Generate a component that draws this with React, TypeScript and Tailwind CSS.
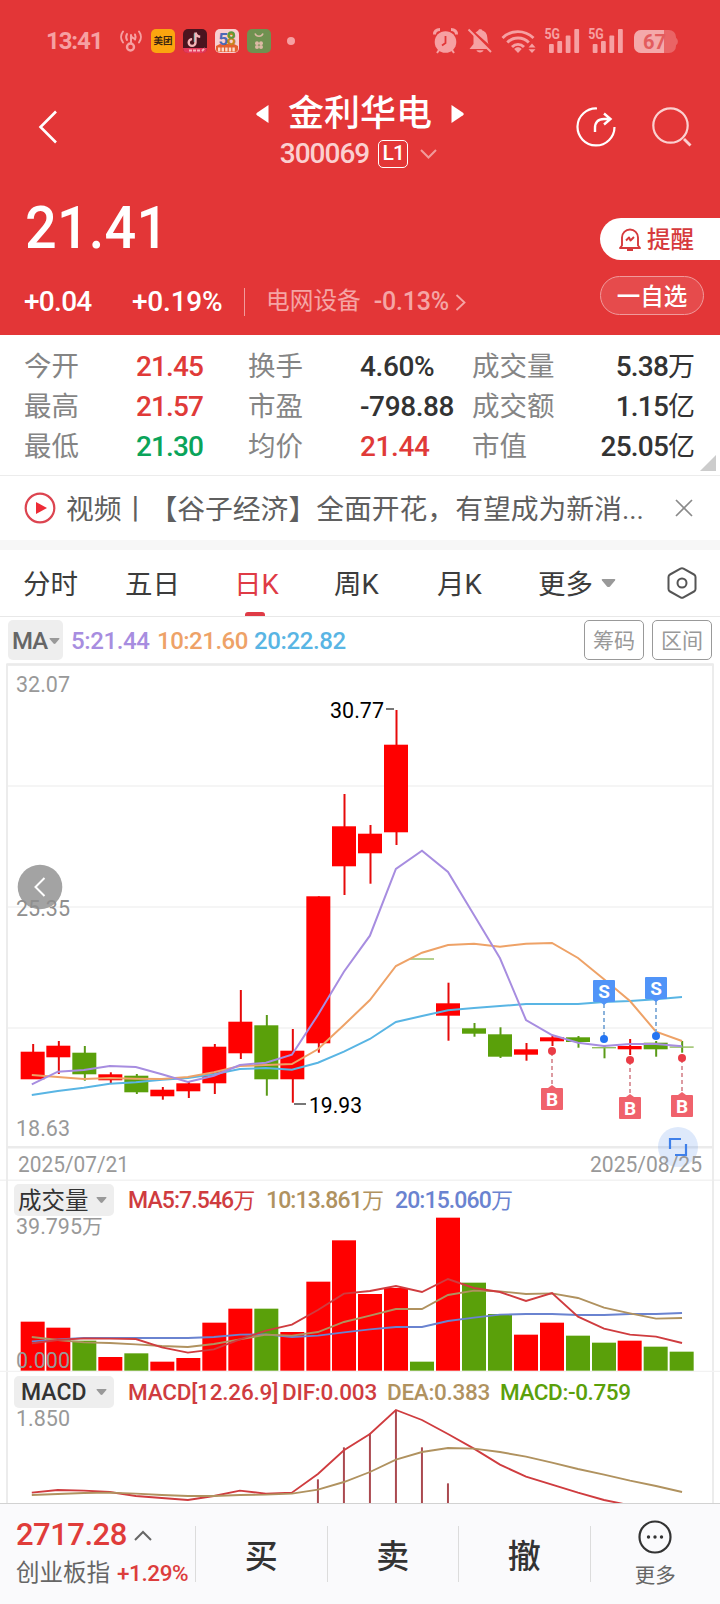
import type { ReactNode } from "react";

type Candle = {
  up: boolean;
  top: number;
  bottom: number;
  high: number;
  low: number;
};

const RED = "#ff0000";
const GREEN = "#5aa00a";

function candle(up: boolean, top: number, bottom: number, high: number, low: number): Candle {
  return { up, top, bottom, high, low };
}

const candles: Candle[] = [
  candle(true, 1051.7, 1079.3, 1044, 1079),
  candle(true, 1045.7, 1057.3, 1041, 1074),
  candle(false, 1052.7, 1074.3, 1046, 1080.7),
  candle(true, 1074.3, 1080.3, 1072.3, 1083.3),
  candle(false, 1075.7, 1092.3, 1074, 1094),
  candle(true, 1089.7, 1096.3, 1087, 1099.7),
  candle(true, 1083.3, 1091.3, 1081.3, 1098),
  candle(true, 1046.7, 1083.3, 1044, 1094),
  candle(true, 1021.7, 1053.3, 990, 1059),
  candle(false, 1025.3, 1079.3, 1015, 1095.7),
  candle(true, 1050.7, 1079.3, 1029, 1102.7),
  candle(true, 896.3, 1043.3, 896.3, 1052.7),
  candle(true, 826.3, 866.3, 794, 895),
  candle(true, 833.7, 853.3, 825, 883.7),
  candle(true, 744.7, 832.3, 710, 845),
  candle(false, 958.3, 959.7, 959, 959),
  candle(true, 1003.3, 1015.7, 982.7, 1040.7),
  candle(false, 1028.3, 1033.7, 1023, 1036.7),
  candle(false, 1034.3, 1056.7, 1027.3, 1058),
  candle(true, 1049.3, 1054.7, 1043, 1060.7),
  candle(true, 1037.3, 1041.3, 1035, 1046),
  candle(false, 1037.3, 1042, 1036, 1047.7),
  candle(false, 1047, 1048.4, 1046, 1058.3),
  candle(true, 1046, 1049.3, 1039, 1055),
  candle(false, 1042.7, 1049.3, 1041, 1056.7),
  candle(false, 1046.4, 1047.8, 1041, 1052.7),
];

const ma5 = [1084.3, 1071.7, 1070, 1066, 1067, 1074.3, 1082, 1075.7, 1065, 1062.7, 1054.7, 1015, 971.7, 935.7, 869, 850.7, 872, 915, 958.3, 1020, 1035, 1042.7, 1046, 1044, 1044, 1046.3];
const ma10 = [1075, 1077, 1079, 1078, 1078.7, 1079, 1077, 1072.3, 1066, 1065, 1064, 1049.3, 1025, 1000, 966, 952.7, 945, 943.7, 946.7, 943.7, 943, 958, 979.3, 1001, 1031.7, 1041];
const ma20 = [1095, 1091, 1087.7, 1083.7, 1082.3, 1079.7, 1078, 1074.3, 1069, 1068, 1069.7, 1062.7, 1051.7, 1039, 1022, 1016, 1010.3, 1008, 1006, 1004, 1004, 1004, 1002, 1001, 999.3, 997];

// the volume and MACD panes are drawn in a 2160 unit wide space
const volumes = [455, 473, 512, 561, 550, 575, 564, 458, 416, 416, 486, 335, 211, 372, 354, 575, 143, 338, 432, 494, 458, 497, 518, 512, 530, 545];
const vol5 = [520, 510, 505, 506, 507, 532, 548, 538, 508, 482, 464, 420, 371, 363, 348, 366, 327, 354, 366, 393, 369, 440, 476, 494, 500, 519];
const vol10 = [501, 510, 517, 519, 523, 528, 531, 522, 508, 494, 497, 486, 456, 437, 417, 417, 375, 362, 364, 372, 370, 384, 413, 430, 446, 444];
const vol20 = [514, 508, 504, 504, 504, 504, 504, 501, 494, 493, 501, 497, 487, 478, 471, 471, 453, 443, 434, 432, 432, 435, 435, 432, 432, 429];

const dif = [968, 960, 962, 966, 978, 984, 990, 978, 962, 971, 968, 912, 841, 792, 720, 750, 792, 836, 884, 920, 944, 968, 990, 1006];
const dea = [975, 972, 969, 968, 971, 975, 978, 978, 975, 974, 971, 959, 936, 906, 869, 846, 834, 836, 846, 860, 878, 897, 914, 932, 948, 966];
const macdBars = [
  { i: 11, y: 928 },
  { i: 12, y: 832 },
  { i: 13, y: 790 },
  { i: 14, y: 720 },
  { i: 15, y: 832 },
  { i: 16, y: 940 },
];

function linePoints(values: number[], scale = 1) {
  return values.map((y, i) => `${((31.8 + i * 26.01) * scale).toFixed(1)},${y}`).join(" ");
}

const barX = (i: number) => Math.round((20.5 + i * 25.97) * 3) / 3;

const trades = [
  { kind: "B", x: 552, dot: 1051, box: 1088 },
  { kind: "S", x: 604, dot: 1039, box: 980 },
  { kind: "B", x: 630, dot: 1060, box: 1097 },
  { kind: "S", x: 656, dot: 1036, box: 977 },
  { kind: "B", x: 682, dot: 1058, box: 1095 },
];

function ChartText(props: { x: number; y: number; w?: number; fill?: string; size?: number; children: ReactNode }) {
  return (
    <text
      x={props.x}
      y={props.y}
      fontSize={props.size ?? 22.5}
      fill={props.fill ?? "#999"}
      textLength={props.w}
      lengthAdjust="spacingAndGlyphs"
    >
      {props.children}
    </text>
  );
}

function StatusBar() {
  return (
    <div className="flex h-[82px] items-center justify-between pr-[44px] pl-[46px] text-[#f6a0a2]">
      <div className="flex items-center">
        <span className="w-[73px] text-[24px] font-bold tracking-[-1.1px]">13:41</span>
        <svg width="24" height="22" viewBox="0 0 24 22" fill="none" stroke="currentColor" strokeWidth="2" strokeLinecap="round">
          <path d="M4 1.500a9 9 0 0 0 0 11M8 4a6 6 0 0 0 0 6M20 1.500a9 9 0 0 1 0 11M16 4.500a6 6 0 0 1 0 5M12 5v8M12 5.500c.5 2 1.500 2.500 3 3" />
          <circle cx="11.5" cy="17" r="3.5" strokeWidth="2.4" />
        </svg>
        <span className="ml-2 flex size-6 items-center justify-center rounded-[5px] bg-[#fba50f] text-[9.5px] font-bold text-[#3a2410]">
          美团
        </span>
        <svg className="ml-2" width="24" height="24" viewBox="0 0 24 24" fill="none">
          <rect width="24" height="24" rx="5" fill="#4b141f" />
          <path d="M12.500 3.500v10a3.400 3.400 0 1 1-3.400-3.400M12.500 3.500c.5 2.700 2 4 4.700 4.200" stroke="#f6b6b9" strokeWidth="2.4" />
          <path d="M11.300 4.500v8.500" stroke="#86c9cb" strokeWidth="1" />
          <path d="M0 19h24q0 5-5 5H5q-5 0-5-5z" fill="#e5395b" />
          <path d="M6 21.500h11M19 22l3-3" stroke="#f9b3ba" strokeWidth="1.8" strokeDasharray="3 1" />
        </svg>
        <svg className="ml-2" width="24" height="24" viewBox="0 0 24 24">
          <rect width="24" height="24" rx="5" fill="#f7cfd0" />
          <path d="M1 17l4-2 14 0 4 2v3q0 3-3 3H4q-3 0-3-3z" fill="#e4602f" />
          <path d="M3 20.500h18" stroke="#fbd9c8" strokeWidth="4" strokeDasharray="2.4 1.2" />
          <text x="3.5" y="15.5" fontSize="17" fontWeight="700" fill="#4c69b5">5</text>
          <text x="11.5" y="15.5" fontSize="17" fontWeight="700" fill="#c8851f">8</text>
          <circle cx="16.3" cy="6" r="2.7" fill="none" stroke="#5c9a3c" strokeWidth="2" />
        </svg>
        <svg className="ml-2" width="24" height="24" viewBox="0 0 24 24">
          <rect width="24" height="24" rx="5" fill="#6f9150" />
          <path d="M8 4.500a4.300 4.300 0 0 0 8 0" stroke="#dcb9a4" strokeWidth="1.6" fill="none" />
          <g fill="#dcb9a4">
            <circle cx="10" cy="14.2" r="2" />
            <circle cx="14" cy="14.2" r="2" />
            <circle cx="10" cy="18" r="2" />
            <circle cx="14" cy="18" r="2" />
          </g>
        </svg>
        <span className="ml-4 size-2 rounded-full bg-current" />
      </div>
      <svg width="244" height="28" viewBox="432 27 244 28" fill="none" stroke="currentColor" className="overflow-visible">
        <circle cx="445.5" cy="42" r="10.8" fill="currentColor" stroke="none" />
        <path d="M434.5 34.500c0-3 2-5 5.500-5M456.500 34.500c0-3-2-5-5.500-5" strokeWidth="3" />
        <path d="M439 50l-2 3M452 50l2 3" strokeWidth="2" />
        <path d="M445.500 36v7l-3.500 2.500" stroke="#e23637" strokeWidth="1.8" />
        <path d="M473.500 35l14 14h-18l4-5zM475.500 32.500c1.500-1.500 3-1.500 3.500-3.300h2.500c.5 1.800 2.300 1 4.300 3.500 2 2.800 1.500 7 2.200 10.300l1 1.500z" fill="currentColor" stroke="none" />
        <path d="M476.500 50.300h7c-.5 2.800-6.500 2.800-7 0z" fill="currentColor" stroke="none" />
        <path d="M468.500 29.500l22.500 22.500" strokeWidth="2" />
        <path d="M502.500 38c8.500-8.500 22-8.500 31 0M507.300 42.500c6-6 15.500-6 21.500 0M512 47c3.500-3.500 8.500-3.500 12 0" strokeWidth="2.9" />
        <path d="M518 53l-3.800-4c2-2.200 5.500-2.200 7.500 0z" fill="currentColor" stroke="none" />
        <path d="M528.500 47.500l3.500-4 3.500 4zM528.500 49.300l3.500 3.700 3.500-3.700z" fill="currentColor" stroke="none" />
        {[0, 43.7].map((dx) => (
          <g key={dx} fill="currentColor" stroke="none">
            <rect x={549 + dx} y="44" width="4.8" height="9" rx="1" />
            <rect x={557.3 + dx} y="41" width="4.8" height="12" rx="1" />
            <rect x={565.7 + dx} y="35.5" width="4.8" height="17.5" rx="1" />
            <rect x={574.3 + dx} y="29" width="4.8" height="24" rx="1" />
            <text x={544.5 + dx} y="39" fontSize="14" fontWeight="700" textLength="15.5" lengthAdjust="spacingAndGlyphs">
              5G
            </text>
          </g>
        ))}
        <rect x="634" y="30" width="42" height="23" rx="7" fill="#ea6465" stroke="none" />
        <path d="M641 30h23v23h-23a7 7 0 0 1-7-7v-9a7 7 0 0 1 7-7z" fill="#f4a9aa" stroke="none" />
        <path d="M676 38c2.500 1 2.500 6 0 7z" fill="#ea6465" stroke="none" />
        <text x="643" y="49" fontSize="20" fontWeight="700" fill="#e35c5e" stroke="none">
          67
        </text>
      </svg>
    </div>
  );
}

function Header() {
  return (
    <header className="h-[335px] bg-[#e33637] text-white">
      <StatusBar />
      <div className="flex h-[106px] pr-[28px] pl-[38px]">
        <svg className="mt-[28px]" width="20" height="34" viewBox="0 0 20 34" fill="none" stroke="white" strokeWidth="2.6">
          <path d="M18 1.500L2.500 17 18 32.500" />
        </svg>
        <div className="ml-[198px] flex flex-col items-center">
          <div className="mt-[8px] flex h-[48px] items-center">
            <svg width="13" height="20" viewBox="0 0 13 20" fill="white">
              <path d="M12.500 1v18L1 11.300q-1.500-1.300 0-2.600z" />
            </svg>
            <span className="mx-[19px] text-[36px] leading-[46px] font-medium">金利华电</span>
            <svg width="13" height="20" viewBox="0 0 13 20" fill="white">
              <path d="M.5 1v18L12 11.300q1.500-1.300 0-2.600z" />
            </svg>
          </div>
          <div className="mr-[3px] flex h-[32px] items-center">
            <span className="text-[28px] font-medium tracking-[-1px] text-[#fbd0d0]">300069</span>
            <span className="ml-[9px] flex h-[28px] w-[30px] items-center justify-center rounded-[5px] border border-white text-[21px] font-medium tracking-[-1px]">
              L1
            </span>
            <svg className="ml-[12px]" width="17" height="10" viewBox="0 0 17 10" fill="none" stroke="#f19b9b" strokeWidth="2">
              <path d="M1 1l7.500 7.500L16 1" />
            </svg>
          </div>
        </div>
        <div className="mt-[25px] ml-auto flex h-[40px] gap-[36px]">
          <svg width="40" height="40" viewBox="0 0 40 40" fill="none" stroke="white" strokeWidth="2.2">
            <path d="M21 1.500A18.500 18.500 0 1 0 38.500 20" />
            <path d="M19 25v-4c0-6 3-9 9-9h6M28 6.500l6.500 5.500-6.500 5.500" strokeWidth="2.4" />
          </svg>
          <svg width="40" height="40" viewBox="0 0 40 40" fill="none" stroke="#fbd0d0" strokeWidth="2.2">
            <circle cx="18.5" cy="18.5" r="17.2" />
            <path d="M32 32l6.500 6.500" strokeWidth="2.8" />
          </svg>
        </div>
      </div>
      <div className="flex">
        <div className="flex grow flex-col">
          <span className="mt-[4px] ml-[25px] origin-left scale-x-[0.93] text-[60px] leading-[72px] font-medium tracking-[0.2px]">21.41</span>
          <div className="mt-[21px] flex h-[34px] items-center pl-[24px] text-[28px] font-medium">
            <span className="w-[108px] tracking-[-0.7px]">+0.04</span>
            <span className="w-[112px] tracking-[-0.2px]">+0.19%</span>
            <span className="h-[28px] w-px bg-[#f19b9b]" />
            <span className="ml-[21px] text-[23.7px] font-normal text-[#f5a5a5]">电网设备</span>
            <span className="ml-[13px] text-[25px] font-medium tracking-[-0.2px] text-[#f5a5a5]">-0.13%</span>
            <svg className="ml-[6px]" width="11" height="17" viewBox="0 0 11 17" fill="none" stroke="#f5a5a5" strokeWidth="1.8">
              <path d="M1.500 1l8 7.500-8 7.500" />
            </svg>
          </div>
        </div>
        <div className="mt-[30px] flex w-[120px] flex-col gap-[16px]">
          <button type="button" className="flex h-[42px] items-center rounded-l-full bg-white pl-[18px] text-[23.5px] font-medium text-[#d63a3c]">
            <svg className="mr-[5px]" width="24" height="24" viewBox="0 0 24 24" fill="none" stroke="currentColor" strokeWidth="1.9" strokeLinejoin="round">
              <path d="M4 18.500v-8a8 8 0 0 1 16 0v8l2 2.500H2z" />
              <path d="M9 23h6" strokeWidth="2.2" />
              <path d="M8 13.500l3-3 1.500 3 3.500-3.500" />
            </svg>
            <span className="pt-[3px]">提醒</span>
          </button>
          <button type="button" className="flex h-[39px] w-[104px] items-center justify-center rounded-full border border-[#f09a9b] bg-[#e64b4c] pt-[4px] text-[23.5px] font-medium">
            一自选
          </button>
        </div>
      </div>
    </header>
  );
}

const stats = [
  ["今开", "21.45", "text-[#e03a38]", "换手", "4.60%", "text-[#333]", "成交量", "5.38万"],
  ["最高", "21.57", "text-[#e03a38]", "市盈", "-798.88", "text-[#333]", "成交额", "1.15亿"],
  ["最低", "21.30", "text-[#0aa45a]", "均价", "21.44", "text-[#e03a38]", "市值", "25.05亿"],
];

function Stats() {
  return (
    <section className="relative h-[141px] border-b border-[#ececec] pt-[12px]">
      {stats.map((r) => (
        <div key={r[0]} className="flex h-[40px] items-center pr-[25px] pl-[24px] text-[27.5px] whitespace-nowrap text-[#858585]">
          <span className="w-[112px]">{r[0]}</span>
          <span className={`w-[112px] text-[28px] font-medium tracking-[-0.9px] ${r[2]}`}>{r[1]}</span>
          <span className="w-[112px]">{r[3]}</span>
          <span className={`w-[112px] text-[28px] font-medium tracking-[-0.4px] ${r[5]}`}>{r[4]}</span>
          <span>{r[6]}</span>
          <span className="ml-auto text-[28px] font-medium tracking-[-0.8px] text-[#333]">
            {r[7].slice(0, -1)}
            <span className="text-[27px] font-normal tracking-normal">{r[7].slice(-1)}</span>
          </span>
        </div>
      ))}
      <svg className="absolute right-[4px] bottom-[4px]" width="16" height="16" viewBox="0 0 16 16">
        <path d="M16 0v16H0z" fill="#ccc" />
      </svg>
    </section>
  );
}

function News() {
  return (
    <section className="flex h-[64px] items-center pl-[24px] text-[27.8px] whitespace-nowrap text-[#5f5f5f]">
      <svg width="32" height="32" viewBox="0 0 32 32" fill="none">
        <circle cx="16" cy="16" r="14.3" stroke="#dc4450" strokeWidth="2.2" />
        <path d="M12 10l11 6-11 6z" fill="#ee2b36" />
      </svg>
      <p className="ml-[10px] w-[609px] pt-[3px]">
        视频丨【谷子经济】全面开花，有望成为新消...
      </p>
      <svg width="18" height="18" viewBox="0 0 18 18" stroke="#8a8a8a" strokeWidth="1.7">
        <path d="M1 1l16 16M17 1L1 17" />
      </svg>
    </section>
  );
}

function Tabs() {
  return (
    <nav className="flex h-[67px] items-center border-b border-[#e8e8e8] pl-[23px] text-[27.5px] whitespace-nowrap text-[#3c3c3c]">
      <span className="w-[102px] pt-[3px]">分时</span>
      <span className="w-[109px] pt-[3px]">五日</span>
      <span className="relative flex h-full w-[100px] items-center pt-[3px] text-[#df3b46]">
        日K
        <span className="absolute bottom-0 left-[11px] h-[4px] w-[20px] rounded-t-[3px] bg-[#df3b46]" />
      </span>
      <span className="w-[103px] pt-[3px]">周K</span>
      <span className="w-[101px] pt-[3px]">月K</span>
      <span className="w-[54px] pt-[3px]">更多</span>
      <svg className="ml-[9px]" width="15" height="10" viewBox="0 0 15 10">
        <path d="M1.500 1h12q1.500 0 .5 1.500L9 8.500q-1.500 1-3 0L1 2.500Q0 1 1.500 1z" fill="#999" />
      </svg>
      <svg className="ml-[50px]" width="32" height="32" viewBox="0 0 32 32" fill="none" stroke="#555" strokeWidth="2">
        <path d="M14.500 1.700q1.500-.8 3 0L28 7.500q1.500.8 1.500 2.500v12q0 1.700-1.500 2.500l-10.500 5.800q-1.500.8-3 0L4 24.500q-1.500-.8-1.500-2.500v-12Q2.500 8.300 4 7.500z" />
        <circle cx="16" cy="16" r="4.5" />
      </svg>
    </nav>
  );
}

function Caret() {
  return (
    <svg width="11" height="8" viewBox="0 0 11 8" className="shrink-0">
      <path d="M1 1h9q.8.200.3 1L6.500 6.500q-1 .8-2 0L.7 2Q.2 1.200 1 1z" fill="#999" />
    </svg>
  );
}

function MaRow() {
  return (
    <div className="flex h-[46px] items-center pr-[8px] pl-[8px] text-[24px] font-medium">
      <span className="flex h-[40px] w-[55px] items-center rounded-[5px] bg-[#eeeeee] pt-px pl-[4px] tracking-[-1px] text-[#666]">
        <span className="mr-[2px]">MA</span>
        <Caret />
      </span>
      <span className="ml-[8px] w-[86px] pt-[2px] tracking-[-0.4px] text-[#a78de0]">5:21.44</span>
      <span className="w-[97px] pt-[2px] tracking-[-0.5px] text-[#eea267]">10:21.60</span>
      <span className="pt-[2px] tracking-[-0.4px] text-[#59b5e4]">20:22.82</span>
      <span className="ml-auto flex h-[40px] w-[60px] items-center justify-center rounded-[5px] border border-[#999] pt-[3px] text-[21px] font-normal text-[#999]">
        筹码
      </span>
      <span className="ml-[8px] flex h-[40px] w-[60px] items-center justify-center rounded-[5px] border border-[#999] pt-[3px] text-[21px] font-normal text-[#999]">
        区间
      </span>
    </div>
  );
}

function KChart() {
  return (
    <svg className="block" width="720" height="518" viewBox="0 663 720 518">
      <path d="M0 1180.3h720" stroke="#f2f2f2" strokeWidth="1.5" />
      <path d="M7 1181V664.500h706V1181" fill="none" stroke="#ececec" strokeWidth="2" />
      <path d="M7 664.500h706M7 1147.300h706" stroke="#ebebeb" strokeWidth="2.5" />
      <path d="M8 786h704M8 907h704M8 1028h704" stroke="#f2f2f2" strokeWidth="1.5" />
      <circle cx="40" cy="887" r="22.3" fill="#a3a3a3" />
      <path d="M44.500 878l-9 9 9 9" fill="none" stroke="white" strokeWidth="2" />
      {candles.map((c, i) => {
        const color = c.up ? RED : GREEN;
        const flat = c.bottom - c.top < 2;
        return (
          <g key={i}>
            <path d={`M${barX(i) + 12.5} ${c.high}V${c.low}`} stroke={c.up ? "#e60a0a" : "#5a9a18"} strokeWidth="2" />
            <rect x={barX(i)} y={c.top} width="24" height={c.bottom - c.top} fill={flat ? "#93bd5f" : color} />
          </g>
        );
      })}
      <g fill="none" strokeWidth="2">
        <polyline points={linePoints(ma20)} stroke="#59b5e4" />
        <polyline points={linePoints(ma10)} stroke="#eea267" />
        <polyline points={linePoints(ma5)} stroke="#a78de0" />
      </g>
      {trades.map((t) => {
        const sell = t.kind === "S";
        return (
          <g key={t.x}>
            <path
              d={sell ? `M${t.x} ${t.box + 24}V${t.dot}` : `M${t.x} ${t.box - 4}V${t.dot}`}
              stroke={sell ? "#7fabd8" : "#d99097"}
              strokeWidth="1.8"
              strokeDasharray="4 3"
            />
            <circle cx={t.x} cy={t.dot} r="4" fill={sell ? "#2475f2" : "#ea3c46"} />
            <rect x={t.x - 11} y={t.box} width="22" height="22" rx="1" fill={sell ? "#5094f8" : "#f0626c"} />
            <path
              d={sell ? `M${t.x - 4} ${t.box + 22}h8l-4 3z` : `M${t.x - 4} ${t.box}h8l-4-3z`}
              fill={sell ? "#5094f8" : "#f0626c"}
            />
            <text x={t.x} y={t.box + 18} fontSize="19" fontWeight="700" fill="white" textAnchor="middle">
              {t.kind}
            </text>
          </g>
        );
      })}
      <path d="M386 709h8M294 1104h12" stroke="#777" strokeWidth="1.8" />
      <ChartText x={16} y={692} w={54}>32.07</ChartText>
      <ChartText x={16} y={916} w={54} fill="#8f8f8f">25.35</ChartText>
      <ChartText x={16} y={1136} w={54}>18.63</ChartText>
      <ChartText x={330} y={718} w={54} fill="#000">30.77</ChartText>
      <ChartText x={309} y={1113} w={53} fill="#000">19.93</ChartText>
      <circle cx="678" cy="1147" r="20" fill="#4a87e8" fillOpacity="0.18" />
      <path d="M670 1149v-10h11M686 1144v11h-11" fill="none" stroke="#3f80ea" strokeWidth="2.2" />
      <ChartText x={18} y={1172} w={111}>2025/07/21</ChartText>
      <ChartText x={590} y={1172} w={112}>2025/08/25</ChartText>
    </svg>
  );
}

function VolumePane() {
  return (
    <section className="relative h-[191px]">
      <svg className="block" width="720" height="191" viewBox="0 33 2160 573">
        <path d="M21 33v573M2139 33v573" stroke="#ececec" strokeWidth="6" />
        <path d="M0 604.500h2160" stroke="#f2f2f2" strokeWidth="4" />
        {volumes.map((v, i) => (
          <rect key={i} x={barX(i) * 3} y={v} width="72" height={602 - v} fill={candles[i].up ? RED : GREEN} />
        ))}
        <g fill="none" strokeWidth="5.6">
          <polyline points={linePoints(vol20, 3)} stroke="#6a83d0" />
          <polyline points={linePoints(vol10, 3)} stroke="#b0925f" />
          <polyline points={linePoints(vol5, 3)} stroke="#cf3c3f" />
        </g>
        <ChartText x={48} y={192} w={198} size={66}>39.795</ChartText>
        <ChartText x={246} y={192} w={62} size={62}>万</ChartText>
        <ChartText x={48} y={593} w={162} size={66} fill="#999">0.000</ChartText>
      </svg>
      <div className="absolute top-[3px] left-[14px] flex h-[32px] items-center text-[23px] font-medium whitespace-nowrap">
        <span className="flex h-[32px] w-[100px] items-center justify-between rounded-[5px] bg-[#eeeeee] pr-[7px] pl-[4px] text-[23.5px] font-normal text-[#333]">
          <span className="pt-[3px]">成交量</span>
          <Caret />
        </span>
        <span className="ml-[14px] w-[138px] pt-[2px] tracking-[-0.9px] text-[#cf3c3f]">MA5:7.546<span className="text-[22px] font-normal">万</span></span>
        <span className="w-[129px] pt-[2px] tracking-[-0.9px] text-[#b0925f]">10:13.861<span className="text-[22px] font-normal">万</span></span>
        <span className="pt-[2px] tracking-[-0.9px] text-[#6a83d0]">20:15.060<span className="text-[22px] font-normal">万</span></span>
      </div>
    </section>
  );
}

function MacdPane() {
  return (
    <section className="relative h-[131px] overflow-hidden">
      <svg className="block" width="720" height="131" viewBox="0 606 2160 393">
        <path d="M21 606v393M2139 606v393" stroke="#ececec" strokeWidth="6" />
        {macdBars.map((b) => (
          <path key={b.i} d={`M${(31.8 + b.i * 26.01) * 3} ${b.y}V1000`} stroke="#aa4a50" strokeWidth="6" />
        ))}
        <g fill="none" strokeWidth="5.6">
          <polyline points={linePoints(dif, 3)} stroke="#cf3c3f" />
          <polyline points={linePoints(dea, 3)} stroke="#b0925f" />
        </g>
        <ChartText x={48} y={768} w={162} size={66}>1.850</ChartText>
      </svg>
      <div className="absolute top-[4px] left-[14px] flex h-[32px] items-center text-[22.5px] font-medium whitespace-nowrap">
        <span className="flex h-[32px] w-[100px] items-center justify-between rounded-[5px] bg-[#eeeeee] pr-[7px] pl-[7px] text-[23px] text-[#333]">
          <span className="pt-[2px]">MACD</span>
          <Caret />
        </span>
        <span className="ml-[14px] w-[154px] pt-[2px] tracking-[-0.2px] text-[#cf3c3f]">MACD[12.26.9]</span>
        <span className="w-[105px] pt-[2px] tracking-[-0.2px] text-[#cf3c3f]">DIF:0.003</span>
        <span className="w-[113px] pt-[2px] tracking-[-0.3px] text-[#b0925f]">DEA:0.383</span>
        <span className="pt-[2px] tracking-[-0.4px] text-[#5aa00a]">MACD:-0.759</span>
      </div>
    </section>
  );
}

function Footer() {
  return (
    <footer className="flex h-[101px] items-center border-t border-[#d2d2d2] bg-[#fafafc] text-[#333]">
      <div className="flex h-full w-[195px] flex-col pl-[16px] whitespace-nowrap">
        <div className="mt-[12px] flex h-[39px] items-center">
          <span className="text-[31px] font-medium tracking-[-0.5px] text-[#e03c3a]">2717.28</span>
          <svg className="ml-[7px]" width="18" height="11" viewBox="0 0 18 11" fill="none" stroke="#666" strokeWidth="2">
            <path d="M1 10l8-8 8 8" />
          </svg>
        </div>
        <div className="flex h-[38px] items-center text-[23.5px] text-[#666]">
          创业板指
          <span className="ml-[7px] text-[22.5px] font-medium tracking-[-0.4px] text-[#dc3d3c]">+1.29%</span>
        </div>
      </div>
      {["买", "卖", "撤"].map((label) => (
        <button
          key={label}
          type="button"
          className="flex h-[56px] w-[131.5px] items-center justify-center border-l border-[#dcdcdc] pt-[5px] text-[33px] font-medium"
        >
          {label}
        </button>
      ))}
      <button type="button" className="flex h-[56px] grow flex-col items-center justify-center border-l border-[#dcdcdc] text-[20.5px] leading-[26px] text-[#666]">
        <svg width="34" height="34" viewBox="0 0 34 34" fill="none" className="shrink-0">
          <circle cx="17" cy="17" r="15.5" stroke="#333" strokeWidth="2.2" />
          <g fill="#333">
            <circle cx="10.5" cy="17" r="1.7" />
            <circle cx="17" cy="17" r="1.7" />
            <circle cx="23.5" cy="17" r="1.7" />
          </g>
        </svg>
        <span className="mt-[9px]">更多</span>
      </button>
    </footer>
  );
}

export default function App() {
  return (
    <main className="h-[1604px] w-[720px] overflow-hidden bg-white font-[Roboto,'Noto_Sans_CJK_SC',sans-serif]">
      <Header />
      <Stats />
      <News />
      <div className="h-[10px] bg-[#f7f7f7]" />
      <Tabs />
      <MaRow />
      <KChart />
      <VolumePane />
      <MacdPane />
      <Footer />
    </main>
  );
}
